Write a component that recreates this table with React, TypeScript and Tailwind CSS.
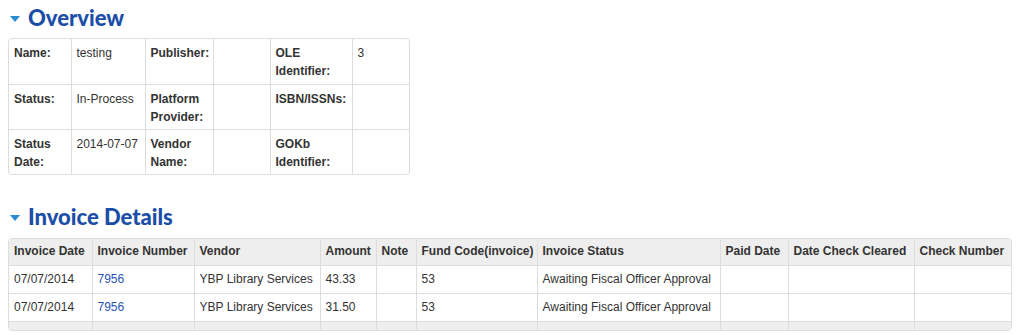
const overviewRows: [string, string, string, string, string, string][] = [
  ['Name:', 'testing', 'Publisher:', '', 'OLE Identifier:', '3'],
  ['Status:', 'In-Process', 'Platform Provider:', '', 'ISBN/ISSNs:', ''],
  ['Status Date:', '2014-07-07', 'Vendor Name:', '', 'GOKb Identifier:', ''],
];

const overviewCols = ['w-[62px]', 'w-[74px]', 'w-[68px]', 'w-[57px]', 'w-[82px]', 'w-[58px]'];

const invoiceCols = [
  { label: 'Invoice Date', w: 'w-[83px]' },
  { label: 'Invoice Number', w: 'w-[102px]' },
  { label: 'Vendor', w: 'w-[126px]' },
  { label: 'Amount', w: 'w-[56px]' },
  { label: 'Note', w: 'w-[40px]' },
  { label: 'Fund Code(invoice)', w: 'w-[121px]' },
  { label: 'Invoice Status', w: 'w-[183px]' },
  { label: 'Paid Date', w: 'w-[68px]' },
  { label: 'Date Check Cleared', w: 'w-[126px]' },
  { label: 'Check Number', w: 'w-[98px]' },
];

const invoices = [
  { date: '07/07/2014', number: '7956', vendor: 'YBP Library Services', amount: '43.33', fund: '53', status: 'Awaiting Fiscal Officer Approval' },
  { date: '07/07/2014', number: '7956', vendor: 'YBP Library Services', amount: '31.50', fund: '53', status: 'Awaiting Fiscal Officer Approval' },
];

function SectionTitle({ children }: { children: string }) {
  return (
    <h2 className="flex items-center gap-[8px] pl-[2px] text-[22px] leading-[30px] font-black text-[#1b4ea8] [font-family:Lato,'Open_Sans',sans-serif]">
      <svg width="10" height="6" viewBox="0 0 10 6" className="mt-[1px]">
        <path d="M0 0h10L5 6z" fill="#2a8bd2" />
      </svg>
      {children}
    </h2>
  );
}

export default function App() {
  const ovCell = 'border-l border-t border-[#dddddd] px-[5px] pt-[5px] pb-0 leading-[18px] align-top first:border-l-0';
  const cell = 'border-l border-t border-[#dddddd] px-[5px] py-[5px] align-top first:border-l-0';
  return (
    <div className="px-2 pt-[3px] text-[12px] leading-[17px] text-[#333] [font-family:'Liberation_Sans',Arial,sans-serif]">
      <SectionTitle>Overview</SectionTitle>

      <div className="mt-[5px] w-[402px] overflow-hidden rounded-[4px] border border-[#dddddd]">
        <table className="w-full table-fixed border-collapse">
          <colgroup>
            {overviewCols.map((w, i) => (
              <col key={i} className={w} />
            ))}
          </colgroup>
          <tbody>
            {overviewRows.map((r, i) => (
              <tr key={i} className="h-[45px] [&:first-child>td]:border-t-0">
                {r.map((v, j) => (
                  <td key={j} className={`${ovCell} ${j % 2 === 0 ? 'font-bold' : ''}`}>
                    {v}
                  </td>
                ))}
              </tr>
            ))}
          </tbody>
        </table>
      </div>

      <div className="mt-[27px]">
        <SectionTitle>Invoice Details</SectionTitle>
      </div>

      <div className="mt-[6px] w-[1004px] overflow-hidden rounded-[4px] border border-[#dddddd]">
        <table className="w-full table-fixed border-collapse">
          <colgroup>
            {invoiceCols.map((c) => (
              <col key={c.label} className={c.w} />
            ))}
          </colgroup>
          <thead>
            <tr className="h-[26px] bg-[#eeeeee]">
              {invoiceCols.map((c) => (
                <th key={c.label} className="border-l border-[#dddddd] px-[5px] text-left font-bold whitespace-nowrap first:border-l-0">
                  {c.label}
                </th>
              ))}
            </tr>
          </thead>
          <tbody>
            {invoices.map((inv, i) => (
              <tr key={i} className="h-[27px]">
                <td className={cell}>{inv.date}</td>
                <td className={cell}>
                  <a href="#" className="text-[#2a55b5]">{inv.number}</a>
                </td>
                <td className={`${cell} whitespace-nowrap`}>{inv.vendor}</td>
                <td className={cell}>{inv.amount}</td>
                <td className={cell}></td>
                <td className={cell}>{inv.fund}</td>
                <td className={`${cell} whitespace-nowrap`}>{inv.status}</td>
                <td className={cell}></td>
                <td className={cell}></td>
                <td className={cell}></td>
              </tr>
            ))}
          </tbody>
          <tfoot>
            <tr className="h-[9px] bg-[#eeeeee]">
              {invoiceCols.map((c) => (
                <td key={c.label} className="border-l border-t border-[#dddddd] p-0 first:border-l-0"></td>
              ))}
            </tr>
          </tfoot>
        </table>
      </div>
    </div>
  );
}
